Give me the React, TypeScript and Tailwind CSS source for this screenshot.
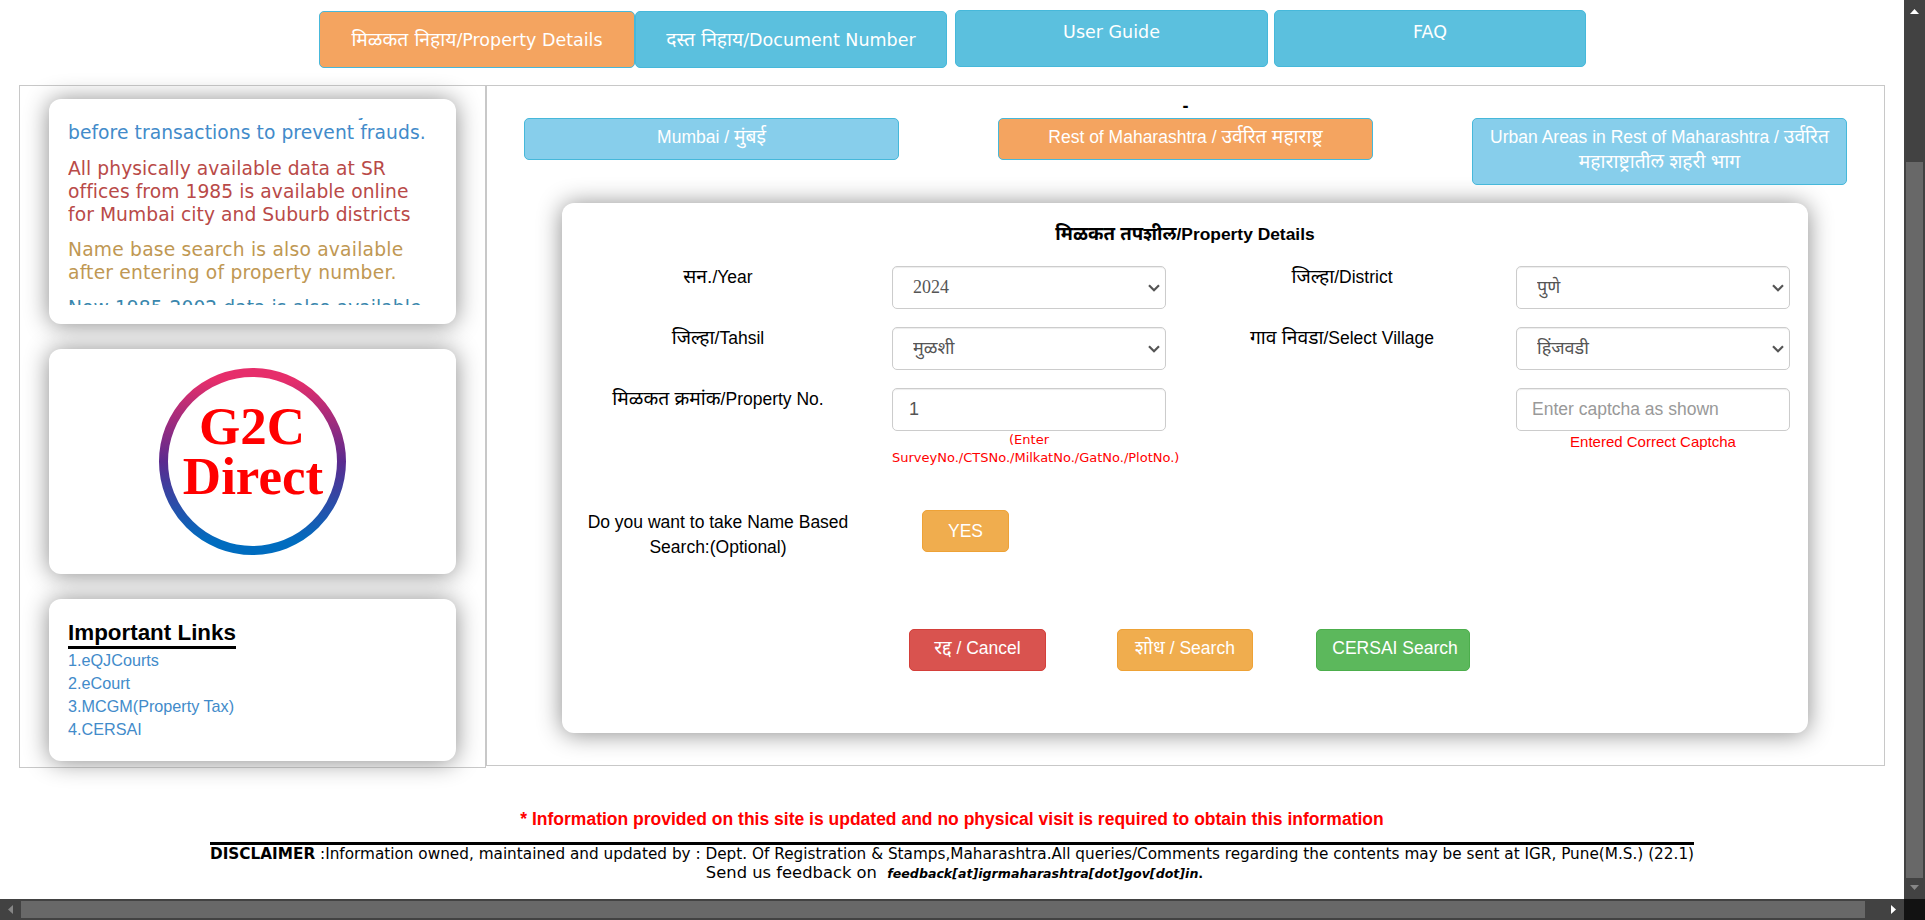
import React from "react";

const ARIAL = "font-['Liberation_Sans','Noto_Sans',sans-serif]";
const VERDANA = "font-['DejaVu_Sans','Noto_Sans',sans-serif]";
const SHADOW = "shadow-[0_1px_24px_#8a8a8a]";

const field =
  "block h-[43px] w-[274px] rounded-[5px] border border-[#ccc] bg-white text-[#555] shadow-[inset_0_1px_1px_rgba(0,0,0,0.075)] outline-none";

function Tab({ className, children }: { className: string; children: React.ReactNode }) {
  return (
    <button
      className={`h-[57px] shrink-0 whitespace-nowrap rounded-[5px] border border-[#46b8da] text-[17.5px] leading-[25px] text-white ${VERDANA} ${className}`}
    >
      {children}
    </button>
  );
}

/* Marathi text, set slightly larger than the Latin text beside it. */
function Mr({ children }: { children: React.ReactNode }) {
  return (
    <span lang="mr" className="text-[1.1em] leading-[1px]">
      {children}
    </span>
  );
}

function RegionButton({ className, children }: { className: string; children: React.ReactNode }) {
  return (
    <button
      className={`w-[375px] rounded-[5px] border border-[#46b8da] px-3 text-[17.5px] leading-[25px] text-white ${className}`}
    >
      {children}
    </button>
  );
}

function Label({ children, className = "-mt-px" }: { children: React.ReactNode; className?: string }) {
  return (
    <label className={`w-[312px] text-center text-[17.5px] leading-[25px] text-black ${className}`}>{children}</label>
  );
}

function Select({ value, className }: { value: string; className?: string }) {
  return (
    <div className="relative w-[274px]">
      <select className={`${field} appearance-none pl-5 text-[18px] ${className ?? ""}`} defaultValue={value}>
        <option>{value}</option>
      </select>
      <svg
        className="pointer-events-none absolute right-[6px] top-[18px]"
        width="12"
        height="8"
        viewBox="0 0 12 8"
        fill="none"
        stroke="#555"
        strokeWidth="2.2"
      >
        <path d="M1 1.200 6 6.200l5-5" />
      </svg>
    </div>
  );
}

function Notices() {
  return (
    <div className={`flex h-[187px] flex-col overflow-hidden text-[18.7px] leading-[23px] ${VERDANA}`}>
      <div className="-mt-[20px] shrink-0 whitespace-nowrap tracking-[0.06px]">
        <p className="text-[#428bca]">
          Please search the online history
          <br />
          before transactions to prevent frauds.
        </p>
        <p className="mt-[13px] text-[#b94a48]">
          All physically available data at SR
          <br />
          offices from 1985 is available online
          <br />
          for Mumbai city and Suburb districts
        </p>
        <p className="mt-[12px] tracking-[0.2px] text-[#c09853]">
          Name base search is also available
          <br />
          after entering of property number.
        </p>
        <p className="mt-[12px] text-[#3a87ad]">Now 1985-2002 data is also available</p>
      </div>
    </div>
  );
}

function Logo() {
  return (
    <svg width="187" height="188" viewBox="0 0 187 188">
      <defs>
        <linearGradient id="ring" x1="0" y1="0" x2="0" y2="1">
          <stop offset="0.04" stopColor="#e62e6b" />
          <stop offset="0.5" stopColor="#5b2a8f" />
          <stop offset="0.95" stopColor="#006cbf" />
        </linearGradient>
      </defs>
      <circle cx="93.5" cy="93.5" r="89" fill="none" stroke="url(#ring)" strokeWidth="9" />
      <g fill="#ff0000" fontFamily="Liberation Serif, serif" fontWeight="700" fontSize="53" textAnchor="middle">
        <text x="93" y="76">G2C</text>
        <text x="94" y="125.500">Direct</text>
      </g>
    </svg>
  );
}

export default function App() {
  return (
    <div
      className={`grid h-[920px] w-[1925px] grid-cols-[1904px_21px] grid-rows-[899px_21px] overflow-hidden bg-white text-black ${ARIAL}`}
    >
      <main className="overflow-hidden">
        <nav className="flex h-[85px] items-start pl-[319px] pt-[10px]">
          <Tab className="mt-px w-[316px] bg-[#f4a460] pt-[2px]"><Mr>मिळकत निहाय</Mr>/Property Details</Tab>
          <Tab className="mt-px w-[312px] bg-[#5bc0de] pt-[2px]"><Mr>दस्त निहाय</Mr>/Document Number</Tab>
          <Tab className="ml-[8px] w-[313px] bg-[#5bc0de] pb-[12px]">User Guide</Tab>
          <Tab className="ml-[6px] w-[312px] bg-[#5bc0de] pb-[12px]">FAQ</Tab>
        </nav>

        <div className="flex items-start pl-[19px]">
          <aside className="flex h-[683px] w-[467px] flex-col gap-[25px] border border-[#c8c8c8] pl-[29px] pt-[13px]">
            <section className={`h-[225px] w-[407px] shrink-0 rounded-[12px] bg-white px-[19px] py-[19px] ${SHADOW}`}>
              <Notices />
            </section>
            <section
              className={`flex h-[225px] w-[407px] shrink-0 items-center justify-center rounded-[12px] bg-white ${SHADOW}`}
            >
              <Logo />
            </section>
            <section className={`h-[162px] w-[407px] shrink-0 rounded-[12px] bg-white px-[19px] pt-[20px] ${SHADOW}`}>
              <h3 className="w-fit border-b-[3px] border-black text-[22.4px] font-bold leading-[27px]">Important Links</h3>
              <ul className="text-[16.2px] leading-[23px] text-[#428bca]">
                <li>1.eQJCourts</li>
                <li>2.eCourt</li>
                <li>3.MCGM(Property Tax)</li>
                <li>4.CERSAI</li>
              </ul>
            </section>
          </aside>

          <section className="h-[681px] w-[1399px] border border-[#c8c8c8]">
            <div className="h-[32px] pt-[8px] text-center text-[18px] font-bold leading-[25px]">-</div>
            <div className="flex h-[85px] items-start justify-between pl-[37px] pr-[37px]">
              <RegionButton className="h-[42px] bg-[#87ceeb] pb-[3px]">Mumbai / <Mr>मुंबई</Mr></RegionButton>
              <RegionButton className="h-[42px] bg-[#f4a460] pb-[3px]">Rest of Maharashtra / <Mr>उर्वरित महाराष्ट्र</Mr></RegionButton>
              <RegionButton className="h-[67px] bg-[#87ceeb] pb-[3px]">
                Urban Areas in Rest of Maharashtra / <Mr>उर्वरित महाराष्ट्रातील शहरी भाग</Mr>
              </RegionButton>
            </div>

            <form className={`ml-[75px] h-[530px] w-[1246px] rounded-[12px] bg-white pt-[18px] ${SHADOW}`}>
              <h4 className="h-[45px] text-center text-[17.4px] font-bold leading-[26px]">
                <span lang="mr" className="text-[1.07em] leading-[1px]">मिळकत तपशील</span>/Property Details
              </h4>
              <div className="flex h-[61px]">
                <Label><Mr>सन.</Mr>/Year</Label>
                <div className="ml-[18px] w-[294px]">
                  <Select value="2024" className="font-['Liberation_Serif',serif]" />
                </div>
                <Label><Mr>जिल्हा</Mr>/District</Label>
                <div className="ml-[18px]">
                  <Select value="पुणे" />
                </div>
              </div>
              <div className="flex h-[61px]">
                <Label><Mr>जिल्हा</Mr>/Tahsil</Label>
                <div className="ml-[18px] w-[294px]">
                  <Select value="मुळशी" />
                </div>
                <Label><Mr>गाव निवडा</Mr>/Select Village</Label>
                <div className="ml-[18px]">
                  <Select value="हिंजवडी" />
                </div>
              </div>
              <div className="flex h-[121px]">
                <Label><Mr>मिळकत क्रमांक</Mr>/Property No.</Label>
                <div className="ml-[18px] w-[294px]">
                  <input className={`${field} px-4 text-[18px]`} defaultValue="1" />
                  <div className={`w-[274px] text-center text-[13px] leading-[18px] text-[#ff0000] ${VERDANA}`}>
                    (Enter
                    <br />
                    <span className="block w-[287px] whitespace-nowrap text-left">
                      SurveyNo./CTSNo./MilkatNo./GatNo./PlotNo.)
                    </span>
                  </div>
                </div>
                <div className="ml-[330px]">
                  <input
                    className={`${field} px-[15px] text-[17.5px] placeholder:text-[#999]`}
                    placeholder="Enter captcha as shown"
                  />
                  <p className="text-center text-[15px] leading-[21px] text-[#ff0000]">Entered Correct Captcha</p>
                </div>
              </div>
              <div className="flex h-[120px]">
                <Label className="mt-px">
                  Do you want to take Name Based
                  <br />
                  Search:(Optional)
                </Label>
                <button
                  type="button"
                  className="ml-[48px] mt-px h-[42px] w-[87px] rounded-[5px] border border-[#eea236] bg-[#f0ad4e] text-[17.5px] text-white"
                >
                  YES
                </button>
              </div>
              <div className="flex pl-[347px] text-[17.5px] leading-[25px] text-white">
                <button type="button" className="h-[42px] w-[137px] rounded-[5px] border border-[#d43f3a] bg-[#d9534f] pb-1">
                  <Mr>रद्द</Mr> / Cancel
                </button>
                <button type="button" className="ml-[71px] h-[42px] w-[136px] rounded-[5px] border border-[#eea236] bg-[#f0ad4e] pb-1">
                  <Mr>शोध</Mr> / Search
                </button>
                <button type="button" className="ml-[63px] h-[42px] w-[154px] rounded-[5px] border border-[#4cae4c] bg-[#5cb85c] pb-1 pl-1">
                  CERSAI Search
                </button>
              </div>
            </form>
          </section>
        </div>

        <footer className="flex flex-col items-center">
          <p className="mt-[39px] h-[35px] whitespace-nowrap text-[17.5px] font-bold leading-[25px] text-[#ff0000]">
            * Information provided on this site is updated and no physical visit is required to obtain this information
          </p>
          <p
            className={`w-[1484px] whitespace-nowrap border-t-[3px] border-black text-[15.27px] leading-[19px] ${VERDANA}`}
          >
            <b>DISCLAIMER</b> :Information owned, maintained and updated by : Dept. Of Registration &amp;
            Stamps,Maharashtra.All queries/Comments regarding the contents may be sent at IGR, Pune(M.S.) (22.1)
          </p>
          <p className={`ml-[5px] whitespace-nowrap text-[16.35px] leading-[18px] ${VERDANA}`}>
            Send us feedback on&nbsp;{" "}
            <b className="text-[12.6px]">
              <i>feedback[at]igrmaharashtra[dot]gov[dot]in</i>.
            </b>
          </p>
        </footer>
      </main>

      <div className="flex flex-col items-center bg-[#424242]">
        <svg className="mt-[9px]" width="9" height="5" viewBox="0 0 9 5">
          <path d="M0 5 4.5 0 9 5z" fill="#fff" />
        </svg>
        <div className="mt-[148px] h-[716px] w-[17px] bg-[#686868]" />
        <svg className="mt-[7px]" width="9" height="5" viewBox="0 0 9 5">
          <path d="M0 0h9L4.5 5z" fill="#868686" />
        </svg>
      </div>
      <div className="flex items-center bg-[#424242]">
        <svg className="ml-[8px]" width="5" height="9" viewBox="0 0 5 9">
          <path d="M5 0v9L0 4.500z" fill="#868686" />
        </svg>
        <div className="ml-[8px] h-[17px] w-[1844px] bg-[#686868]" />
        <svg className="ml-[26px]" width="5" height="9" viewBox="0 0 5 9">
          <path d="M0 0v9l5-4.500z" fill="#fff" />
        </svg>
      </div>
      <div className="bg-[#121212]" />
    </div>
  );
}
